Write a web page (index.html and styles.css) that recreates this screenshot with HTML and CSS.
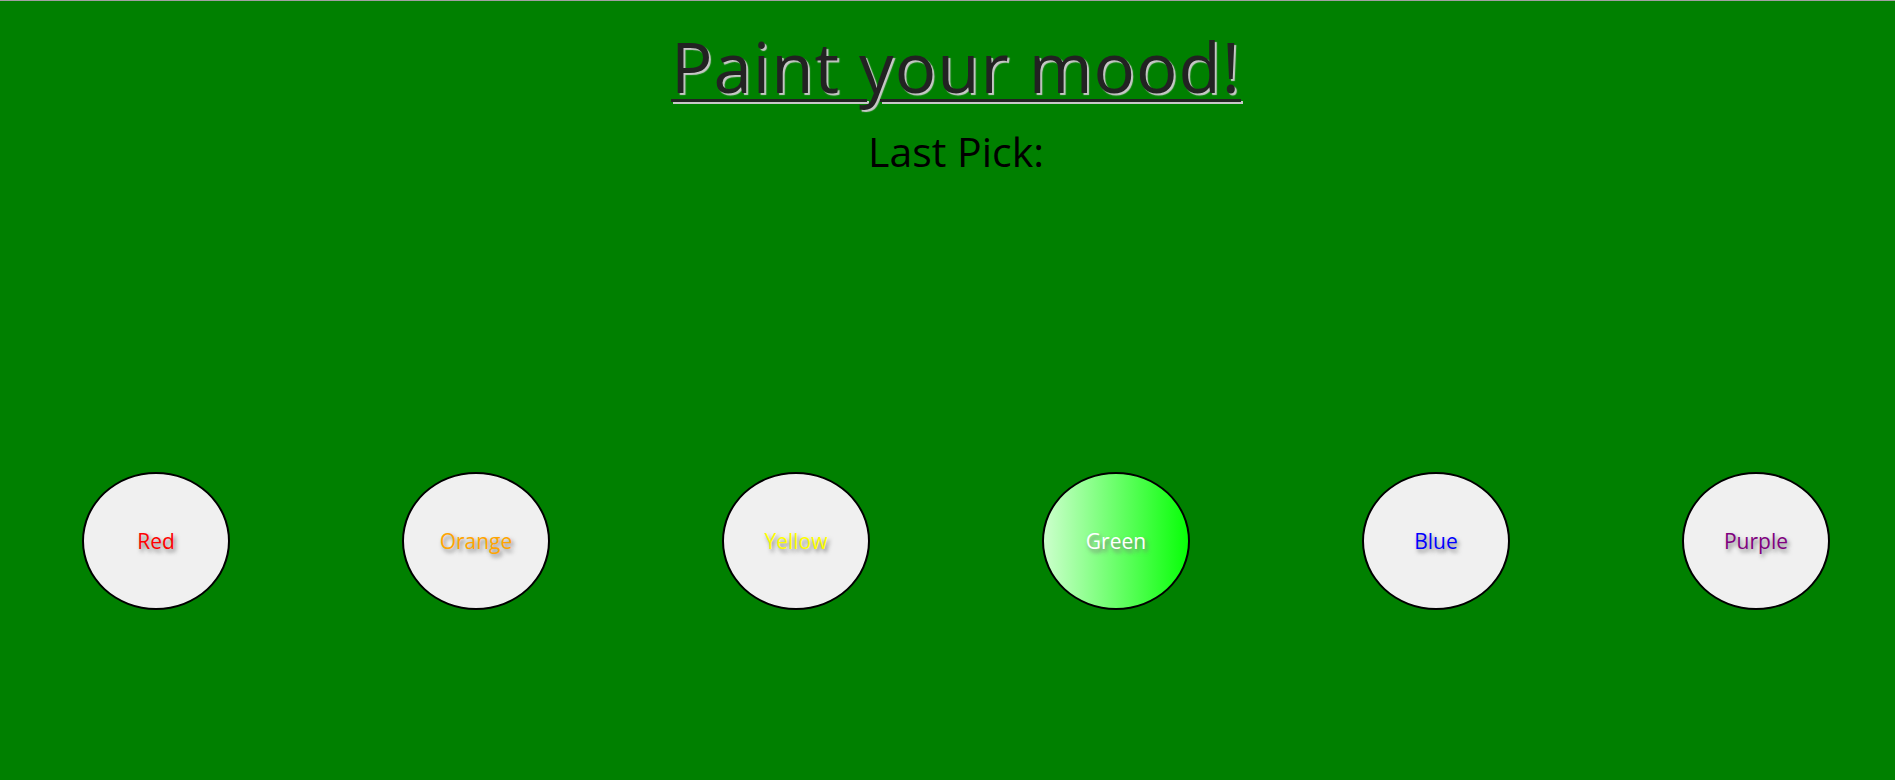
FILE: index.html
```html
<!DOCTYPE html>
<html>
<head>
<meta charset="utf-8">
<title>Paint your mood!</title>
<link rel="stylesheet" href="styles.css">
</head>
<body>
<div class="page">
  <header class="header">
    <h1 class="title">Paint your mood!</h1>
    <h2 class="last-pick">Last Pick:</h2>
    <div class="pick-display"></div>
  </header>
  <div class="palette">
    <button class="mood mood-red">Red</button>
    <button class="mood mood-orange">Orange</button>
    <button class="mood mood-yellow">Yellow</button>
    <button class="mood mood-green">Green</button>
    <button class="mood mood-blue">Blue</button>
    <button class="mood mood-purple">Purple</button>
  </div>
</div>
</body>
</html>
```
FILE: styles.css
```css
html, body {
  margin: 0;
  padding: 0;
  background: #008000;
  overflow: hidden;
}
body {
  height: 780px;
  font-family: "Open Sans", "Noto Sans", sans-serif;
}
.page {
  width: 1912px;
  border-top: 1px solid #a0a0a0;
  height: 779px;
}
.header {
  display: flex;
  flex-direction: column;
  align-items: center;
}
.title {
  margin: 18px 0 0;
  font-size: 69px;
  font-weight: 400;
  letter-spacing: 1px;
  line-height: normal;
  color: #222222;
  text-decoration: underline;
  text-decoration-thickness: 3px;
  text-underline-offset: 6px;
  text-shadow: 2px 2px 1px #c8c8c8;
}
.last-pick {
  margin: 10px 0 0;
  font-size: 41px;
  font-weight: 400;
  line-height: normal;
  color: #000000;
}
.pick-display {
  height: 293px;
}
.palette {
  display: flex;
  justify-content: space-between;
  padding: 0 82px;
}
.mood {
  width: 148px;
  height: 138px;
  border: 2px solid #000;
  border-radius: 50%;
  background: #f0f0f0;
  font-family: "Open Sans", "Noto Sans", sans-serif;
  font-size: 21px;
  padding: 0;
  text-shadow: 2px 3px 4px #777777;
}
.mood-red { color: #ff0000; }
.mood-orange { color: #ffa500; }
.mood-yellow { color: #ffff00; }
.mood-green {
  color: #ffffff;
  background: linear-gradient(to right, #ccffcc, #08ff08);
}
.mood-blue { color: #0000ff; }
.mood-purple { color: #800080; }
```
